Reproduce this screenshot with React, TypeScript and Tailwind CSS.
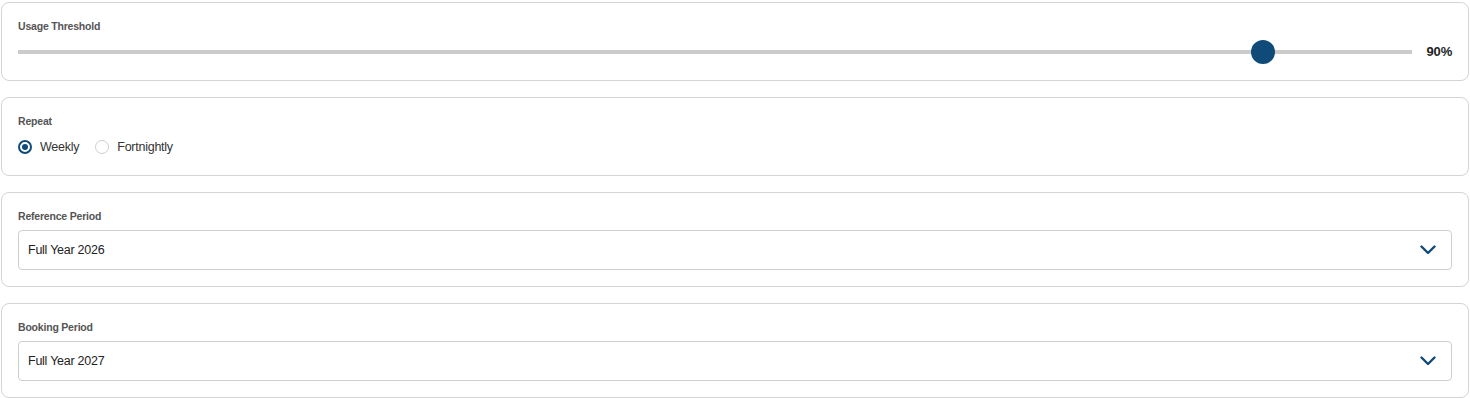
import { useState } from 'react';

const font = { fontFamily: '"Liberation Sans", Arial, sans-serif' };

function Card({ label, children }: { label: string; children: React.ReactNode }) {
  return (
    <div className="rounded-lg border border-[#d4d4d4] bg-white p-4">
      <div className="mb-[7px] text-[10.5px] font-bold leading-[14px] tracking-[-0.2px] text-[#555]">{label}</div>
      {children}
    </div>
  );
}

function Chevron() {
  return (
    <svg width="16" height="10" viewBox="0 0 16 10" fill="none" className="shrink-0">
      <path d="M1.5 1.5 L8 8 L14.5 1.5" stroke="#0f4a78" strokeWidth="2.4" strokeLinecap="round" strokeLinejoin="round" />
    </svg>
  );
}

function SelectBox({ value }: { value: string }) {
  return (
    <div className="mt-[1px] flex h-10 items-center justify-between rounded border border-[#cfcfcf] bg-white pl-[9px] pr-[15px]">
      <span className="text-[12.5px] tracking-[-0.25px] text-[#222]">{value}</span>
      <Chevron />
    </div>
  );
}

function Radio({ checked, label, onClick }: { checked: boolean; label: string; onClick: () => void }) {
  return (
    <button type="button" onClick={onClick} className="flex items-center gap-2">
      {checked ? (
        <span className="flex h-[14px] w-[14px] items-center justify-center rounded-full border-2 border-[#0f4a78]">
          <span className="h-[6px] w-[6px] rounded-full bg-[#0f4a78]" />
        </span>
      ) : (
        <span className="h-[14px] w-[14px] rounded-full border border-[#cfcfcf]" />
      )}
      <span className="text-[12.5px] tracking-[-0.25px] text-[#333]">{label}</span>
    </button>
  );
}

export default function App() {
  const [threshold, setThreshold] = useState(90);
  const [repeat, setRepeat] = useState('weekly');

  return (
    <div className="flex flex-col gap-4 bg-white px-[1px] pt-[2px]" style={font}>
      <Card label="Usage Threshold">
        <div className="flex h-6 items-center gap-[14px]">
          <input
            type="range"
            min={0}
            max={100}
            value={threshold}
            onChange={(e) => setThreshold(Number(e.target.value))}
            className="h-6 flex-1 cursor-pointer appearance-none bg-transparent [&::-webkit-slider-runnable-track]:h-1 [&::-webkit-slider-runnable-track]:bg-[#cbcbcb] [&::-webkit-slider-thumb]:-mt-[10px] [&::-webkit-slider-thumb]:h-6 [&::-webkit-slider-thumb]:w-6 [&::-webkit-slider-thumb]:appearance-none [&::-webkit-slider-thumb]:rounded-full [&::-webkit-slider-thumb]:bg-[#0f4a78]"
          />
          <span className="w-[26px] text-right text-[13px] font-bold tracking-[-0.2px] text-[#222]">{threshold}%</span>
        </div>
      </Card>

      <Card label="Repeat">
        <div className="flex h-6 items-center gap-4">
          <Radio checked={repeat === 'weekly'} label="Weekly" onClick={() => setRepeat('weekly')} />
          <Radio checked={repeat === 'fortnightly'} label="Fortnightly" onClick={() => setRepeat('fortnightly')} />
        </div>
      </Card>

      <Card label="Reference Period">
        <SelectBox value="Full Year 2026" />
      </Card>

      <Card label="Booking Period">
        <SelectBox value="Full Year 2027" />
      </Card>
    </div>
  );
}
